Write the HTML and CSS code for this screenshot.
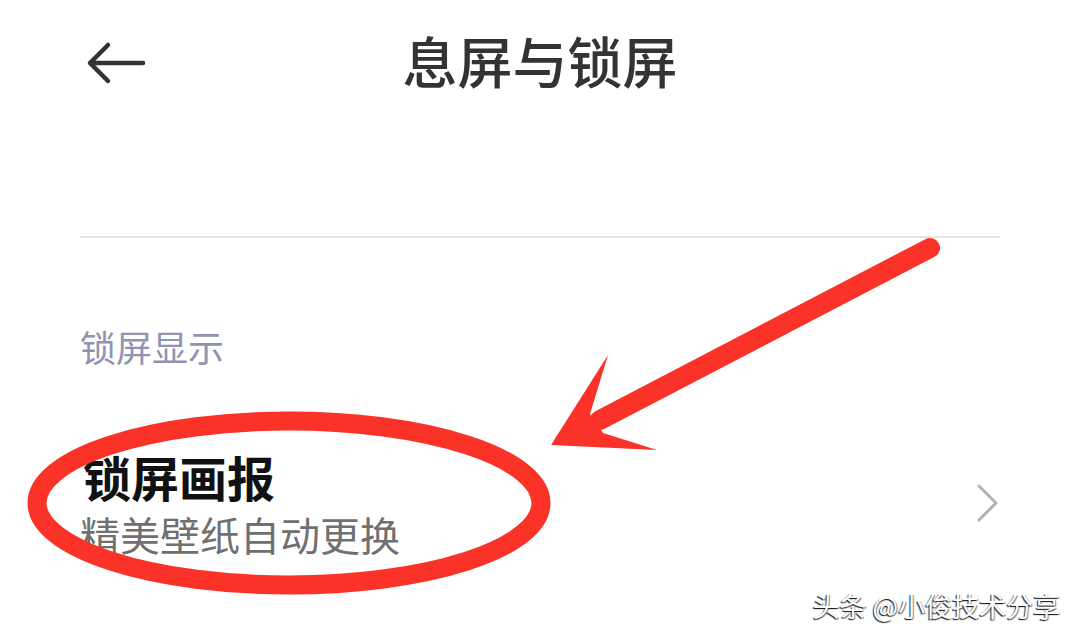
FILE: index.html
```html
<!DOCTYPE html>
<html lang="zh-CN">
<head>
  <meta charset="UTF-8" />
  <meta name="viewport" content="width=device-width, initial-scale=1.0"/>
  <title>息屏与锁屏</title>
  <link rel="stylesheet" href="styles.css">
</head>
<body>

  <div class="page">
    <div class="topbar">
      <div class="back">
        <svg width="64" height="44" viewBox="0 0 64 44">
          <path d="M59 22H6M24 4L6 22L24 40" fill="none" stroke="#333" stroke-width="4.5" stroke-linecap="round" stroke-linejoin="round"/>
        </svg>
      </div>
      <h1 class="title">息屏与锁屏</h1>
      <div></div>
    </div>

    <div class="content">
      <div class="divider"></div>

      <div class="section-label">锁屏显示</div>

      <div class="item">
        <div class="item-text">
          <div class="item-title">锁屏画报</div>
          <div class="item-desc">精美壁纸自动更换</div>
        </div>
        <svg class="chevron" width="24" height="40" viewBox="0 0 24 40">
          <path d="M3 3L20 20L3 37" fill="none" stroke="#b4b4b4" stroke-width="3" stroke-linecap="round" stroke-linejoin="round"/>
        </svg>
      </div>
    </div>

    <!-- 标注：箭头和圈 -->
    <svg class="marks" width="1080" height="638" viewBox="0 0 1080 638">
      <ellipse cx="289" cy="503" rx="252" ry="82" fill="none" stroke="#fa3228" stroke-width="19"/>
      <line x1="930" y1="248" x2="600" y2="420" stroke="#fa3228" stroke-width="20" stroke-linecap="round"/>
      <polygon points="551,445 608,355 590,414 603,433 657,450" fill="#fa3228"/>
    </svg>

    <div class="watermark">头条 @小俊技术分享</div>
  </div>

</body>
</html>
```

FILE: styles.css
```css
body {
  margin: 0;
  background: #fff;
  font-family: "Noto Sans CJK SC", "Noto Sans", sans-serif;
}
.page {
  position: relative;
  width: 1080px;
  height: 638px;
  overflow: hidden;
}
.topbar {
  display: grid;
  grid-template-columns: 1fr auto 1fr;
  align-items: start;
  height: 120px;
}
.back {
  padding-left: 84px;
  padding-top: 41px;
}
.back svg {
  display: block;
}
.title {
  margin: 32px 0 0;
  font-size: 55px;
  line-height: 55px;
  font-weight: 500;
  color: #333;
}
.content {
  margin: 0 80px;
}
.divider {
  margin-top: 116px;
  height: 2px;
  background: #e4e4e4;
}
.section-label {
  margin-top: 90px;
  font-size: 36px;
  line-height: 36px;
  color: #8f94b3;
}
.item {
  display: flex;
  justify-content: space-between;
  align-items: center;
  margin-top: 88px;
}
.item-title {
  font-size: 48px;
  line-height: 48px;
  font-weight: 700;
  color: #111;
  padding-left: 3px;
}
.item-desc {
  margin-top: 14px;
  font-size: 40px;
  line-height: 40px;
  color: #707070;
}
.chevron {
  display: block;
}
.marks {
  position: absolute;
  top: 0;
  left: 0;
  pointer-events: none;
}
.watermark {
  position: absolute;
  right: 20px;
  bottom: 19px;
  font-size: 27px;
  line-height: 27px;
  color: #fff;
  text-shadow: -1px 1px 1px rgba(0,0,0,0.85), 1px 1px 1px rgba(0,0,0,0.5);
}
```
